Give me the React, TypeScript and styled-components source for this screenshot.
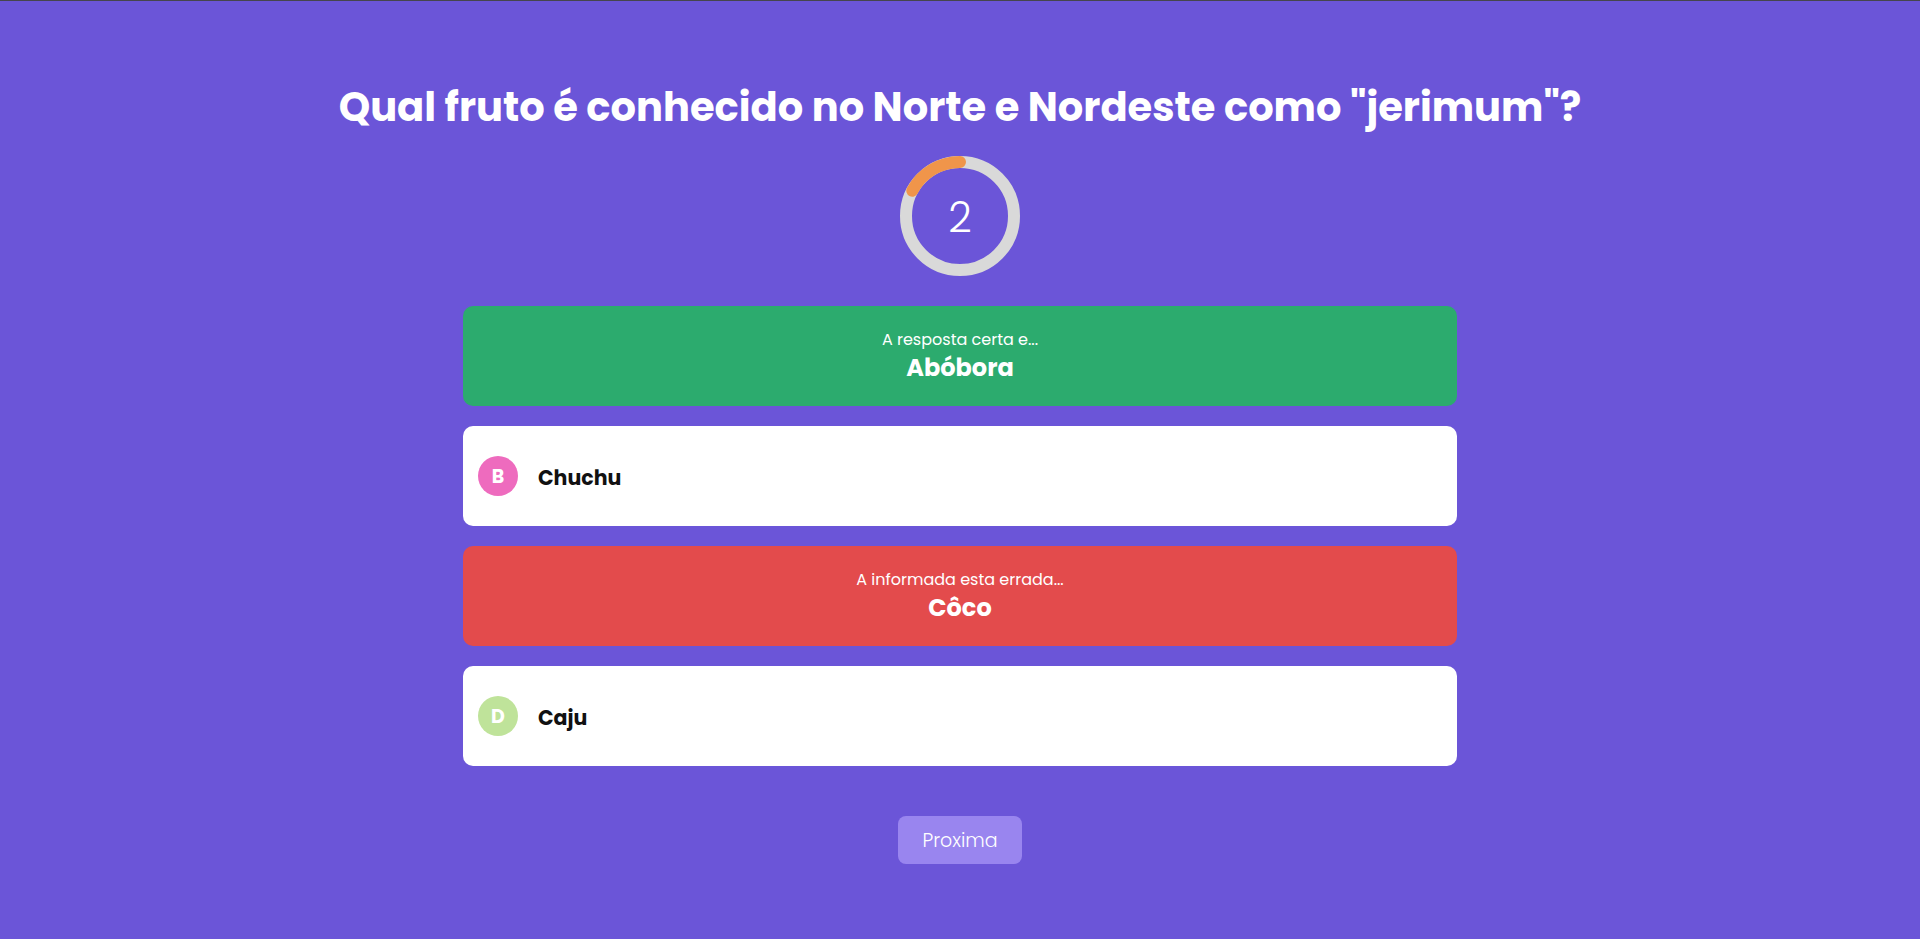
import React from "react";
import styled, { createGlobalStyle } from "styled-components";

const Global = createGlobalStyle`
  html, body {
    margin: 0;
    padding: 0;
    background: #6b55d8;
  }
  body {
    font-family: "Poppins", "Inter", "Noto Sans", sans-serif;
    min-height: 939px;
    border-top: 1px solid #45454d;
    box-sizing: border-box;
  }
`;

const Page = styled.main`
  display: flex;
  flex-direction: column;
  align-items: center;
  padding-top: 76px;
  color: #ffffff;
`;

const Title = styled.h1`
  margin: 0;
  font-size: 40px;
  line-height: 60px;
  font-weight: 700;
  color: #ffffff;
  text-align: center;
`;

const TimerWrap = styled.div`
  position: relative;
  width: 120px;
  height: 120px;
  margin-top: 19px;
  display: flex;
  align-items: center;
  justify-content: center;
`;

const TimerSvg = styled.svg`
  position: absolute;
  inset: 0;
`;

const TimerValue = styled.span`
  position: relative;
  font-size: 41px;
  font-weight: 300;
  color: #ffffff;
  line-height: 1;
  padding-top: 3px;
`;

const Answers = styled.div`
  display: flex;
  flex-direction: column;
  gap: 20px;
  width: 994px;
  margin-top: 30px;
`;

type Tone = "correct" | "wrong";

const ResultCard = styled.div<{ $tone: Tone }>`
  height: 100px;
  border-radius: 10px;
  background: ${(p) => (p.$tone === "correct" ? "#2cab6e" : "#e34b4c")};
  display: flex;
  flex-direction: column;
  align-items: center;
  justify-content: center;
  gap: 2px;
  color: #ffffff;
`;

const ResultLabel = styled.span`
  font-size: 16px;
  font-weight: 400;
  line-height: 22px;
`;

const ResultValue = styled.span`
  font-size: 24px;
  font-weight: 700;
  line-height: 30px;
`;

const OptionCard = styled.div`
  height: 100px;
  border-radius: 10px;
  background: #ffffff;
  display: flex;
  align-items: center;
  padding: 0 15px;
  gap: 20px;
`;

const Letter = styled.span<{ $color: string }>`
  width: 40px;
  height: 40px;
  border-radius: 50%;
  background: ${(p) => p.$color};
  color: #ffffff;
  font-size: 19px;
  font-weight: 700;
  display: flex;
  align-items: center;
  justify-content: center;
`;

const OptionText = styled.span`
  font-size: 20.5px;
  font-weight: 700;
  color: #111111;
  padding-top: 2px;
`;

const NextButton = styled.button`
  margin-top: 50px;
  width: 124px;
  height: 48px;
  border: none;
  border-radius: 8px;
  background: #9985ef;
  color: #ffffff;
  font-family: inherit;
  font-size: 19px;
  font-weight: 300;
  cursor: pointer;
`;

function Timer({ value }: { value: number }) {
  const r = 54;
  const a = (62 * Math.PI) / 180;
  const ex = 60 - r * Math.sin(a);
  const ey = 60 - r * Math.cos(a);
  return (
    <TimerWrap>
      <TimerSvg width="120" height="120" viewBox="0 0 120 120">
        <circle cx="60" cy="60" r={r} fill="none" stroke="#d9d9d9" strokeWidth="12" />
        <path
          d={`M 60 6 A ${r} ${r} 0 0 0 ${ex.toFixed(2)} ${ey.toFixed(2)}`}
          fill="none"
          stroke="#f0954a"
          strokeWidth="12"
          strokeLinecap="round"
        />
      </TimerSvg>
      <TimerValue>{value}</TimerValue>
    </TimerWrap>
  );
}

export default function App() {
  return (
    <>
      <Global />
      <Page>
        <Title>Qual fruto é conhecido no Norte e Nordeste como "jerimum"?</Title>
        <Timer value={2} />
        <Answers>
          <ResultCard $tone="correct">
            <ResultLabel>A resposta certa e...</ResultLabel>
            <ResultValue>Abóbora</ResultValue>
          </ResultCard>
          <OptionCard>
            <Letter $color="#ee6bbe">B</Letter>
            <OptionText>Chuchu</OptionText>
          </OptionCard>
          <ResultCard $tone="wrong">
            <ResultLabel>A informada esta errada...</ResultLabel>
            <ResultValue>Côco</ResultValue>
          </ResultCard>
          <OptionCard>
            <Letter $color="#bfe39a">D</Letter>
            <OptionText>Caju</OptionText>
          </OptionCard>
        </Answers>
        <NextButton>Proxima</NextButton>
      </Page>
    </>
  );
}
